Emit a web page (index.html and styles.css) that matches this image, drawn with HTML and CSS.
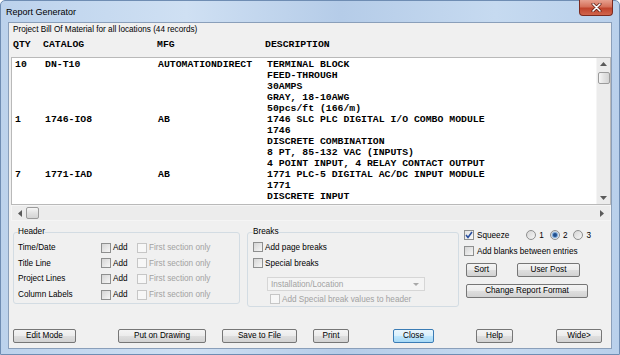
FILE: index.html
```html
<!DOCTYPE html>
<html lang="en">
<head>
<meta charset="UTF-8">
<title>Report Generator</title>
<link rel="stylesheet" href="styles.css">
</head>
<body>
<div class="window">
  <div class="titlebar">
    <span class="title">Report Generator</span>
    <button class="btn-close" title="Close">
      <svg width="11" height="9" viewBox="0 0 11 9"><path d="M2 1 L9 8 M9 1 L2 8" stroke="#5a1a12" stroke-width="3" stroke-linecap="round"/><path d="M2 1 L9 8 M9 1 L2 8" stroke="#fff" stroke-width="1.6" stroke-linecap="round"/></svg>
    </button>
  </div>

  <div class="client">
    <div class="subtitle">Project Bill Of Material for all locations (44 records)</div>
    <div class="cols col-head"><span>QTY</span><span>CATALOG</span><span>MFG</span><span>DESCRIPTION</span></div>

    <div class="list">
      <div class="listbox">
        <div class="rows">
          <div class="cols entry">
            <span>10</span><span>DN-T10</span><span>AUTOMATIONDIRECT</span>
            <div class="desc">
              <div>TERMINAL BLOCK</div>
              <div>FEED-THROUGH</div>
              <div>30AMPS</div>
              <div>GRAY, 18-10AWG</div>
              <div>50pcs/ft (166/m)</div>
            </div>
          </div>
          <div class="cols entry">
            <span>1</span><span>1746-IO8</span><span>AB</span>
            <div class="desc">
              <div>1746 SLC PLC DIGITAL I/O COMBO MODULE</div>
              <div>1746</div>
              <div>DISCRETE COMBINATION</div>
              <div>8 PT, 85-132 VAC (INPUTS)</div>
              <div>4 POINT INPUT, 4 RELAY CONTACT OUTPUT</div>
            </div>
          </div>
          <div class="cols entry">
            <span>7</span><span>1771-IAD</span><span>AB</span>
            <div class="desc">
              <div>1771 PLC-5 DIGITAL AC/DC INPUT MODULE</div>
              <div>1771</div>
              <div>DISCRETE INPUT</div>
            </div>
          </div>
        </div>
        <div class="vscroll">
          <span class="arrow">
            <svg width="7" height="4" viewBox="0 0 7 4"><path d="M0 4 L3.5 0 L7 4 Z" fill="#5a5a5a"/></svg>
          </span>
          <span class="thumb vthumb"></span>
          <span class="spacer"></span>
          <span class="arrow">
            <svg width="7" height="4" viewBox="0 0 7 4"><path d="M0 0 L3.5 4 L7 0 Z" fill="#5a5a5a"/></svg>
          </span>
        </div>
      </div>
      <div class="hscroll">
        <span class="arrow">
          <svg width="4" height="7" viewBox="0 0 4 7"><path d="M4 0 L0 3.5 L4 7 Z" fill="#5a5a5a"/></svg>
        </span>
        <span class="thumb hthumb"></span>
        <span class="spacer"></span>
        <span class="arrow">
          <svg width="4" height="7" viewBox="0 0 4 7"><path d="M0 0 L4 3.5 L0 7 Z" fill="#5a5a5a"/></svg>
        </span>
      </div>
    </div>

    <div class="options">
      <fieldset class="group group-header">
        <legend>Header</legend>
        <div class="hrow">
          <span>Time/Date</span>
          <label class="opt"><span class="check"></span>Add</label>
          <label class="opt muted"><span class="check disabled"></span>First section only</label>
        </div>
        <div class="hrow">
          <span>Title Line</span>
          <label class="opt"><span class="check"></span>Add</label>
          <label class="opt muted"><span class="check disabled"></span>First section only</label>
        </div>
        <div class="hrow">
          <span>Project Lines</span>
          <label class="opt"><span class="check"></span>Add</label>
          <label class="opt muted"><span class="check disabled"></span>First section only</label>
        </div>
        <div class="hrow">
          <span>Column Labels</span>
          <label class="opt"><span class="check"></span>Add</label>
          <label class="opt muted"><span class="check disabled"></span>First section only</label>
        </div>
      </fieldset>

      <fieldset class="group group-breaks">
        <legend>Breaks</legend>
        <label class="opt brow"><span class="check"></span>Add page breaks</label>
        <label class="opt brow"><span class="check"></span>Special breaks</label>
        <div class="dropdown">
          <span>Installation/Location</span>
          <svg width="6" height="3" viewBox="0 0 6 3"><path d="M0 0 L3 3 L6 0 Z" fill="#a8a8a8"/></svg>
        </div>
        <label class="opt muted brow-last"><span class="check disabled"></span>Add Special break values to header</label>
      </fieldset>

      <div class="side">
        <div class="side-row">
          <label class="opt"><span class="check checked">
            <svg width="8" height="8" viewBox="0 0 8 8"><path d="M1 4 L3 6.5 L7 1" fill="none" stroke="#2a4f9e" stroke-width="1.6"/></svg>
          </span>Squeeze</label>
          <div class="radios">
            <label class="opt"><span class="radio"></span>1</label>
            <label class="opt"><span class="radio on"></span>2</label>
            <label class="opt"><span class="radio"></span>3</label>
          </div>
        </div>
        <label class="opt side-row blanks"><span class="check"></span>Add blanks between entries</label>
        <div class="sort-row">
          <button class="btn btn-sort">Sort</button>
          <button class="btn btn-post">User Post</button>
        </div>
        <button class="btn btn-format">Change Report Format</button>
      </div>
    </div>

    <div class="buttons">
      <button class="btn w-edit">Edit Mode</button>
      <button class="btn w-put">Put on Drawing</button>
      <button class="btn w-save">Save to File</button>
      <button class="btn w-print">Print</button>
      <button class="btn btn-default w-close">Close</button>
      <button class="btn w-help">Help</button>
      <button class="btn w-wide">Wide&gt;</button>
    </div>
  </div>
</div>
</body>
</html>
```

FILE: styles.css
```css
* {
  box-sizing: border-box;
}

body {
  margin: 0;
  font-family: "Liberation Sans", Arial, sans-serif;
  font-size: 8.2px;
  color: #000;
}

.window {
  width: 620px;
  height: 355px;
  display: flex;
  flex-direction: column;
  border: 1px solid #6f8db3;
  border-radius: 5px 5px 0 0;
  background: linear-gradient(90deg, #bcd2ec 0%, #cfe0f3 30%, #b5cce8 55%, #c6daf0 80%, #b9d0eb 100%);
}

/* title bar */
.titlebar {
  height: 21px;
  display: flex;
  align-items: flex-start;
  flex-shrink: 0;
}

.title {
  font-size: 9px;
  line-height: 12px;
  margin: 5px 0 0 5px;
}

.btn-close {
  margin-left: auto;
  margin-right: 6px;
  margin-top: -1px;
  width: 34px;
  height: 16px;
  padding: 0;
  border: 1px solid #7c2a1f;
  border-top: 0;
  border-radius: 0 0 4px 4px;
  background: linear-gradient(#e7a08f 0%, #d5705a 45%, #c0432c 55%, #d1654c 100%);
  display: flex;
  align-items: center;
  justify-content: center;
}

/* client area */
.client {
  flex: 1;
  margin: 0 7px 5px 7px;
  border: 1px solid #8a9fba;
  background: #f0f0f0;
  display: flex;
  flex-direction: column;
}

.subtitle {
  margin-top: 2px;
  padding-left: 4px;
  line-height: 10px;
}

.cols {
  display: grid;
  grid-template-columns: 30px 113px 109px 1fr;
  font-family: "Liberation Mono", "Courier New", monospace;
  font-weight: bold;
  font-size: 9.8px;
  line-height: 11px;
  white-space: nowrap;
}

.col-head {
  margin-top: 4px;
  padding-left: 4px;
}

.col-head span:nth-child(3) {
  margin-left: 1px;
}

/* list */
.list {
  margin: 7px 0 0 2px;
  width: 600px;
}

.listbox {
  height: 148px;
  display: flex;
  border: 1px solid #b9b9b9;
  background: #fff;
}

.rows {
  flex: 1;
  overflow: hidden;
  padding: 1px 0 0 3px;
}

.entry {
  align-items: start;
}

.vscroll {
  width: 14px;
  background: #ececec;
  border-left: 1px solid #f5f5f5;
  display: flex;
  flex-direction: column;
  align-items: center;
}

.vscroll .arrow {
  height: 12px;
  display: flex;
  align-items: center;
}

.spacer {
  flex: 1;
}

.thumb {
  border: 1px solid #9b9b9b;
  border-radius: 2px;
  background: linear-gradient(90deg, #f6f6f6, #e2e2e2 50%, #d4d4d4);
}

.vthumb {
  width: 12px;
  height: 12px;
  margin-top: 2px;
}

.hscroll {
  height: 16px;
  display: flex;
  align-items: center;
  padding: 0 4px 0 4px;
  background: #ececec;
  border: 1px solid #f5f5f5;
}

.hscroll .arrow {
  width: 8px;
  display: flex;
  justify-content: center;
}

.hthumb {
  width: 13px;
  height: 12px;
  margin-left: 2px;
  background: linear-gradient(#f6f6f6, #e2e2e2 50%, #d4d4d4);
}

/* options */
.options {
  margin-top: 6px;
  padding-left: 4px;
  display: flex;
  align-items: flex-start;
}

.group {
  margin: 0;
  border: 1px solid #d3dce3;
  border-radius: 3px;
  padding: 0 0 0 4px;
}

.group legend {
  padding: 0;
  line-height: 10px;
}

.group-header {
  width: 227px;
  height: 77px;
}

.group-breaks {
  width: 212px;
  height: 80px;
  margin-left: 7px;
  padding-left: 5px;
}

.hrow {
  display: grid;
  grid-template-columns: 83px 36px 1fr;
  align-items: center;
  height: 15.6px;
}

.hrow:first-of-type {
  margin-top: 3px;
}

.opt {
  display: flex;
  align-items: center;
  white-space: nowrap;
}

.muted {
  color: #a2a2a2;
}

.check {
  width: 10px;
  height: 10px;
  margin-right: 2px;
  border: 1px solid #8e8f8f;
  background: linear-gradient(135deg, #d5d5d5, #f6f6f6);
  display: flex;
  align-items: center;
  justify-content: center;
}

.check.disabled {
  border-color: #c6c6c6;
  background: #f7f7f7;
}

.check.checked {
  background: linear-gradient(135deg, #e2e2e2, #fafafa);
}

.brow {
  height: 16px;
}

.group-breaks legend + .brow {
  margin-top: 2px;
}

.dropdown {
  margin: 6px 0 0 14px;
  width: 158px;
  height: 14px;
  border: 1px solid #d6d6d6;
  background: #f4f4f4;
  color: #a2a2a2;
  display: flex;
  align-items: center;
  justify-content: space-between;
  padding: 0 5px 0 3px;
}

.brow-last {
  margin: 2px 0 0 17px;
  height: 12px;
}

/* right column */
.side {
  margin-left: 5px;
  width: 126px;
  display: flex;
  flex-direction: column;
  align-items: flex-start;
}

.side-row {
  display: flex;
  align-items: center;
  height: 14px;
  margin-top: 1px;
}

.side-row .check {
  margin-right: 3px;
}

.blanks {
  margin-top: 2px;
}

.radios {
  display: flex;
  margin-left: 17px;
  gap: 6px;
}

.radio {
  width: 10px;
  height: 10px;
  margin-right: 3px;
  border: 1px solid #8e8f8f;
  border-radius: 50%;
  background: linear-gradient(135deg, #d5d5d5, #f6f6f6);
  display: flex;
  align-items: center;
  justify-content: center;
}

.radio.on::after {
  content: "";
  width: 4px;
  height: 4px;
  border-radius: 50%;
  background: #23508d;
  box-shadow: 0 0 1px 1px #6c9fd6;
}

.sort-row {
  display: flex;
  margin: 5px 0 0 2px;
}

/* buttons */
.btn {
  height: 14px;
  padding: 0;
  font-family: "Liberation Sans", Arial, sans-serif;
  font-size: 8.2px;
  line-height: 12px;
  color: #000;
  border: 1px solid #767676;
  border-radius: 2px;
  background: linear-gradient(#f4f4f4 0%, #ececec 48%, #dedede 52%, #d2d2d2 100%);
}

.btn-default {
  border-color: #3b7cb5;
  background: linear-gradient(#eaf6fd 0%, #d9f0fc 48%, #bee6fd 52%, #a7d9f5 100%);
}

.btn-sort {
  width: 31px;
}

.btn-post {
  width: 63px;
  margin-left: 20px;
}

.btn-format {
  width: 122px;
  margin: 7px 0 0 2px;
}

.buttons {
  margin-top: 22px;
  padding-left: 4px;
  display: flex;
}

.w-edit { width: 63px; }
.w-put { width: 88px; margin-left: 42px; }
.w-save { width: 75px; margin-left: 16px; }
.w-print { width: 36px; margin-left: 16px; }
.w-close { width: 41px; margin-left: 44px; }
.w-help { width: 37px; margin-left: 42px; }
.w-wide { width: 46px; margin-left: 43px; }
```
